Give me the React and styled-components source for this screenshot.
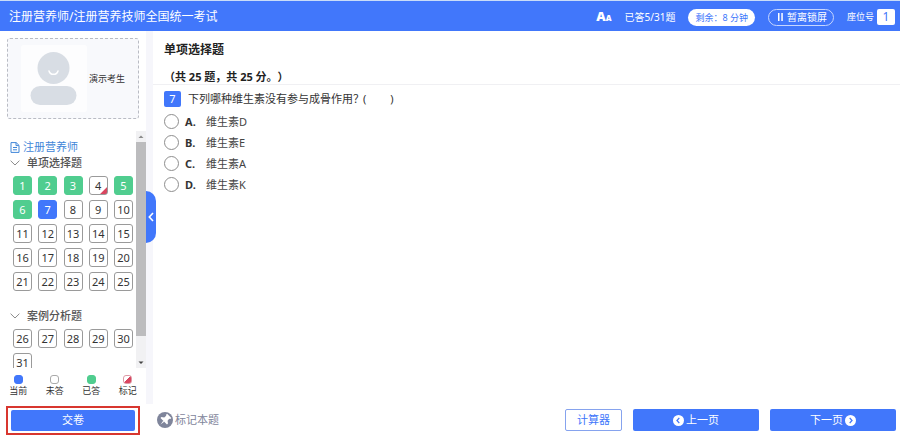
import React, { useState } from 'react';
import styled, { createGlobalStyle, css } from 'styled-components';

const BLUE = '#4177fb';
const GREEN = '#50cd8f';
const RED = '#d9455f';

const sections = [
  { title: '单项选择题', from: 1, to: 25 },
  { title: '案例分析题', from: 26, to: 31 },
];

const answered = [1, 2, 3, 5, 6];
const marked = [4];

const legend = [
  { label: '当前', state: 'current' },
  { label: '未答', state: 'empty' },
  { label: '已答', state: 'answered' },
  { label: '标记', state: 'marked' },
];

const options = [
  { key: 'A', text: '维生素D' },
  { key: 'B', text: '维生素E' },
  { key: 'C', text: '维生素A' },
  { key: 'D', text: '维生素K' },
];

const range = (from, to) => Array.from({ length: to - from + 1 }, (_, i) => from + i);

const stateOf = (number, current) => {
  if (number === current) return 'current';
  if (answered.includes(number)) return 'answered';
  if (marked.includes(number)) return 'marked';
  return 'empty';
};

const App = () => {
  const [current, setCurrent] = useState(7);
  const [choice, setChoice] = useState('');

  return (
    <Page>
      <GlobalStyle />
      <Header>
        <ExamTitle>注册营养师/注册营养技师全国统一考试</ExamTitle>
        <HeaderTools>
          <FontButton type="button" aria-label="字号">
            A<small>A</small>
          </FontButton>
          <span>已答5/31题</span>
          <TimeLeft>剩余：8 分钟</TimeLeft>
          <LockButton type="button">
            <PauseIcon />
            暂离锁屏
          </LockButton>
          <Seat>
            座位号
            <SeatNumber>1</SeatNumber>
          </Seat>
        </HeaderTools>
      </Header>

      <Body>
        <Sidebar>
          <Candidate>
            <Avatar />
            <span>演示考生</span>
          </Candidate>
          <SheetArea>
            <Sheet>
              <SheetLink href="#exam">
                <DocumentIcon />
                注册营养师
              </SheetLink>
              {sections.map(section =>
                <Section key={section.title}>
                  <SectionTitle>
                    <ChevronDownIcon />
                    {section.title}
                  </SectionTitle>
                  <NumberGrid>
                    {range(section.from, section.to).map(number =>
                      <NumberButton
                        key={number}
                        type="button"
                        $state={stateOf(number, current)}
                        onClick={() => setCurrent(number)}
                      >
                        {number}
                      </NumberButton>
                    )}
                  </NumberGrid>
                </Section>
              )}
            </Sheet>
            <ScrollTrack aria-hidden="true">
              <ScrollArrow viewBox="0 0 10 10"><path d="M2.500 6.500 5 4l2.500 2.500z" fill="#8a8a8a" /></ScrollArrow>
              <ScrollThumb />
              <ScrollArrow viewBox="0 0 10 10"><path d="M2.500 4 5 6.500 7.500 4z" fill="#444" /></ScrollArrow>
            </ScrollTrack>
          </SheetArea>
          <Legend>
            {legend.map(item =>
              <LegendItem key={item.label}>
                <Swatch $state={item.state} />
                {item.label}
              </LegendItem>
            )}
          </Legend>
          <CollapseButton type="button" aria-label="收起">
            <svg width="6" height="10" viewBox="0 0 6 10" fill="none" stroke="#fff" strokeWidth="1.6">
              <path d="M5 1 1.300 5 5 9" />
            </svg>
          </CollapseButton>
        </Sidebar>

        <Main>
          <QuestionHeader>
            <QuestionType>单项选择题</QuestionType>
            <div>（共 25 题，共 25 分。）</div>
          </QuestionHeader>
          <Question>
            <QuestionText>
              <QuestionNumber>7</QuestionNumber>
              <span>下列哪种维生素没有参与成骨作用？</span>
              <Blank><span>(</span><span>)</span></Blank>
            </QuestionText>
            {options.map(option =>
              <Option key={option.key}>
                <Radio
                  type="radio"
                  name="answer"
                  value={option.key}
                  checked={choice === option.key}
                  onChange={() => setChoice(option.key)}
                />
                <OptionKey>{option.key}.</OptionKey>
                {option.text}
              </Option>
            )}
          </Question>
        </Main>
      </Body>

      <Footer>
        <SubmitFrame>
          <SubmitButton type="button">交卷</SubmitButton>
        </SubmitFrame>
        <MarkButton type="button">
          <PinIcon />
          标记本题
        </MarkButton>
        <FooterActions>
          <CalculatorButton type="button">计算器</CalculatorButton>
          <PageButton type="button">
            <ArrowIcon d="M6.300 2.800 4 5.500l2.300 2.700" />
            上一页
          </PageButton>
          <PageButton type="button">
            下一页
            <ArrowIcon d="M4.700 2.800 7 5.500 4.700 8.200" />
          </PageButton>
        </FooterActions>
      </Footer>
    </Page>
  );
};

const PauseIcon = () => (
  <svg width="5" height="8" viewBox="0 0 5 8" fill="#fff">
    <rect width="1.500" height="8" />
    <rect x="3.300" width="1.500" height="8" />
  </svg>
);

const DocumentIcon = () => (
  <svg width="10" height="11" viewBox="0 0 10 11" fill="none" stroke="#3f86d8">
    <path d="M1 .6h5.200L9 3.400v7H1zM6 .8v2.800h2.800M3 5.500h4M3 7.800h4" />
  </svg>
);

const ChevronDownIcon = () => (
  <svg width="10" height="6" viewBox="0 0 10 6" fill="none" stroke="#8c8c8c">
    <path d="M.6.700 5 5 9.400.700" />
  </svg>
);

const Avatar = () => (
  <svg width="66" height="67" viewBox="0 0 66 67">
    <rect width="66" height="67" rx="3" fill="#fdfdfe" />
    <circle cx="32.500" cy="23" r="16" fill="#d8dde4" />
    <path d="M28 26a4.700 4.700 0 0 0 9 0" fill="none" stroke="#fff" strokeWidth="1.500" strokeLinecap="round" />
    <rect x="9.500" y="41" width="46" height="19" rx="9.500" fill="#d8dde4" />
  </svg>
);

const PinIcon = () => (
  <svg width="16" height="16" viewBox="0 0 16 16">
    <circle cx="8" cy="8" r="8" fill="#7f859b" />
    <g transform="rotate(45 8 8)" fill="#fff">
      <path d="M5 2h6v1.500l-.9.700.3 2.500 2.200 1.700v1.400H3.400V8.400l2.200-1.700.3-2.500L5 3.500z" />
      <path d="M7.300 9.800h1.400L8 14.300z" />
    </g>
  </svg>
);

const ArrowIcon = ({ d }) => (
  <svg width="11" height="11" viewBox="0 0 11 11">
    <circle cx="5.500" cy="5.500" r="5.500" fill="#fff" />
    <path d={d} fill="none" stroke={BLUE} strokeWidth="1.300" />
  </svg>
);

const GlobalStyle = createGlobalStyle`
  * {
    box-sizing: border-box;
  }
  body {
    margin: 0;
    background: #fff;
    color: #333;
    font: 11px/16px "Noto Sans", "Noto Sans CJK SC", sans-serif;
    text-spacing-trim: space-all;
  }
  button {
    padding: 0;
    border: 0;
    background: none;
    color: inherit;
    font: inherit;
    cursor: pointer;
  }
  svg {
    display: block;
    flex: none;
  }
`;

const Page = styled.div`
  display: flex;
  flex-direction: column;
  min-height: 100vh;
`;

const Header = styled.header`
  display: flex;
  align-items: center;
  justify-content: space-between;
  height: 31px;
  padding: 2px 5px 0 9px;
  border-top: 1px solid #c9dcf8;
  background: ${BLUE};
  color: #fff;
`;

const ExamTitle = styled.h1`
  margin: 0;
  font-size: 12px;
  font-weight: 400;
`;

const HeaderTools = styled.div`
  display: flex;
  align-items: center;
  gap: 13px;
  font-size: 10px;
`;

const FontButton = styled.button`
  display: flex;
  align-items: baseline;
  font-size: 13px;
  font-weight: 900;
  small {
    font-size: 8px;
  }
`;

const TimeLeft = styled.span`
  padding: 0 7px;
  border-radius: 9px;
  background: #fff;
  color: ${BLUE};
  font-size: 9px;
  line-height: 17px;
`;

const LockButton = styled.button`
  display: flex;
  align-items: center;
  gap: 4px;
  height: 17px;
  padding: 0 6px 0 9px;
  border: 1px solid #c6d6ff;
  border-radius: 9px;
`;

const Seat = styled.div`
  display: flex;
  align-items: center;
  gap: 3px;
  font-size: 9px;
`;

const SeatNumber = styled.span`
  width: 18px;
  border-radius: 2px;
  background: #fff;
  color: ${BLUE};
  font-size: 12px;
  text-align: center;
`;

const Body = styled.div`
  display: flex;
  flex: 1;
`;

const Sidebar = styled.aside`
  position: relative;
  display: flex;
  flex-direction: column;
  width: 146px;
  padding-top: 7px;
`;

const Candidate = styled.div`
  display: flex;
  align-items: center;
  gap: 2px;
  height: 81px;
  margin: 0 7px;
  padding-left: 13px;
  border: 1px dashed #b9bcc4;
  border-radius: 3px;
  background: #f8f9fc;
  font-size: 9px;
`;

const SheetArea = styled.div`
  display: flex;
  flex: 1 1 0;
  min-height: 0;
  margin-top: 12px;
  overflow: hidden;
`;

const Sheet = styled.nav`
  flex: 1;
  height: 0;
  padding: 8px 3px 0 10px;
`;

const SheetLink = styled.a`
  display: flex;
  align-items: center;
  gap: 3px;
  color: #3f86d8;
  text-decoration: none;
`;

const Section = styled.section`
  & + & {
    margin-top: 16px;
  }
`;

const SectionTitle = styled.h2`
  display: flex;
  align-items: center;
  gap: 7px;
  margin: 0 0 5px;
  color: #555;
  font-size: 11px;
  font-weight: 500;
`;

const NumberGrid = styled.div`
  display: grid;
  grid-template-columns: repeat(5, 19px);
  justify-content: space-between;
  row-gap: 5px;
  padding: 0 0 1px 3px;
`;

const stateStyles = {
  current: css`
    border-color: ${BLUE};
    background: ${BLUE};
    color: #fff;
  `,
  answered: css`
    border-color: ${GREEN};
    background: ${GREEN};
    color: #fff;
  `,
  marked: css`
    background: linear-gradient(135deg, #fff 79%, ${RED} 80%);
  `,
};

const NumberButton = styled.button`
  height: 19px;
  border: 1px solid #9a9a9a;
  border-radius: 3px;
  background: #fff;
  line-height: 11px;
  text-align: center;
  ${props => stateStyles[props.$state]}
`;

const ScrollTrack = styled.div`
  display: flex;
  flex-direction: column;
  width: 10px;
  background: #f1f1f3;
`;

const ScrollArrow = styled.svg`
  width: 10px;
  height: 11px;
`;

const ScrollThumb = styled.div`
  flex: 1;
  margin-bottom: 21px;
  background: #bcbcbe;
`;

const Legend = styled.div`
  display: grid;
  grid-template-columns: repeat(4, 1fr);
  height: 36px;
  padding-top: 7px;
  font-size: 9px;
  line-height: 12px;
`;

const LegendItem = styled.div`
  display: flex;
  flex-direction: column;
  align-items: center;
  gap: 1px;
`;

const Swatch = styled.span`
  width: 9px;
  height: 9px;
  border: 1px solid #aaa;
  border-radius: 3px;
  ${props => stateStyles[props.$state]}
  ${props => props.$state === 'marked' && css`
    border-color: #dd9aa6;
    background: linear-gradient(135deg, #fff 49%, ${RED} 50%);
  `}
`;

const CollapseButton = styled.button`
  position: absolute;
  top: 160px;
  left: 100%;
  z-index: 1;
  display: flex;
  align-items: center;
  justify-content: center;
  width: 10px;
  height: 52px;
  border-radius: 0 10px 10px 0;
  background: ${BLUE};
`;

const Main = styled.main`
  flex: 1;
  border-left: 7px solid #f6f6fb;
`;

const QuestionHeader = styled.div`
  height: 54px;
  padding: 11px 11px 0;
  border-bottom: 1px solid #f0f0f3;
  color: #222;
  font-weight: 700;
`;

const QuestionType = styled.h2`
  margin: 0 0 11px;
  font-size: 12px;
`;

const Question = styled.div`
  padding: 6px 11px 0;
`;

const QuestionText = styled.div`
  display: flex;
  align-items: center;
  gap: 7px;
  margin-bottom: 4px;
`;

const QuestionNumber = styled.span`
  width: 17px;
  border-radius: 2px;
  background: ${BLUE};
  color: #fff;
  text-align: center;
`;

const Blank = styled.span`
  display: flex;
  gap: 24px;
  margin-left: -8px;
`;

const Option = styled.label`
  display: flex;
  align-items: center;
  height: 21px;
  color: #444;
`;

const Radio = styled.input`
  appearance: none;
  width: 15px;
  height: 15px;
  margin: 0 6px 0 0;
  border: 1px solid #8e8e8e;
  border-radius: 50%;
  &:checked {
    border: 4px solid ${BLUE};
  }
`;

const OptionKey = styled.b`
  width: 21px;
  color: #333;
`;

const Footer = styled.footer`
  display: flex;
  align-items: center;
  height: 32px;
  padding-right: 4px;
`;

const SubmitFrame = styled.div`
  width: 134px;
  margin: 0 17px 0 6px;
  padding: 2px 3px;
  border: 2px solid #d8362f;
`;

const SubmitButton = styled.button`
  display: block;
  width: 100%;
  height: 21px;
  border-radius: 2px;
  background: ${BLUE};
  color: #fff;
`;

const MarkButton = styled.button`
  display: flex;
  align-items: center;
  gap: 2px;
  color: #7f859b;
`;

const FooterActions = styled.div`
  display: flex;
  gap: 11px;
  margin-left: auto;
`;

const CalculatorButton = styled.button`
  width: 57px;
  height: 22px;
  border: 1px solid #86a3ee;
  border-radius: 2px;
  color: ${BLUE};
`;

const PageButton = styled.button`
  display: flex;
  align-items: center;
  justify-content: center;
  gap: 2px;
  width: 126px;
  height: 22px;
  border-radius: 2px;
  background: ${BLUE};
  color: #fff;
`;

export default App;
